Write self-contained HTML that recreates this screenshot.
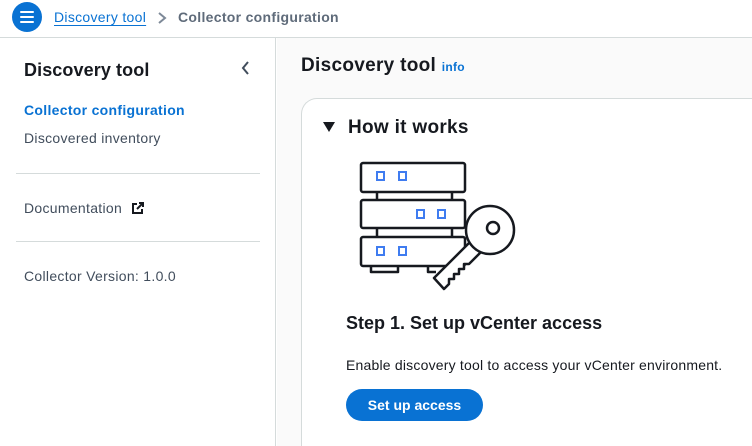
<!DOCTYPE html>
<html><head><style>
*{margin:0;padding:0;box-sizing:border-box}
html,body{width:752px;height:446px;overflow:hidden}
body{font-family:"Liberation Sans",sans-serif;background:#fff;position:relative;color:#16191f}
.top{position:absolute;left:0;top:0;width:752px;height:38px;border-bottom:1px solid #d5dbdb;background:#fff}
.menu{position:absolute;left:12px;top:2px;width:30px;height:30px;border-radius:50%;background:#0972d3}
.menu i{position:absolute;left:8px;width:14px;height:2px;background:#fff;border-radius:1px}
.a{position:absolute;font-size:14px;white-space:nowrap;letter-spacing:0.3px}
.side{position:absolute;left:0;top:38px;width:276px;height:408px;border-right:1px solid #d5dbdb;background:#fff}
.hr{position:absolute;left:16px;width:244px;height:1px;background:#d5dbdb}
.main{position:absolute;left:277px;top:38px;width:475px;height:408px;background:#fafafa;overflow:hidden}
.card{position:absolute;left:24px;top:60px;width:470px;height:348px;background:#fff;border:1px solid #d5dbdb;border-bottom:none;border-radius:16px 0 0 0}
.btn{position:absolute;left:346px;top:389px;width:137px;height:32px;border-radius:16px;background:#0972d3;color:#fff;font-weight:bold;font-size:14px;text-align:center;line-height:32px}
</style></head><body>
<div class="top">
<div class="menu"><i style="top:9px"></i><i style="top:14px"></i><i style="top:19px"></i></div>
<div class="a" style="left:54px;top:9px;color:#0972d3;text-decoration:underline;text-underline-offset:3px">Discovery tool</div>
<svg style="position:absolute;left:156px;top:11px" width="12" height="14"><path d="M3 2l6 5-6 5" fill="none" stroke="#7d8998" stroke-width="2"/></svg>
<div class="a" style="left:178px;top:9px;color:#5f6b7a;font-weight:bold;letter-spacing:0.3px">Collector configuration</div>
</div>
<div class="side">
<div class="a" style="left:24px;top:22px;font-size:18px;font-weight:bold;letter-spacing:0.1px">Discovery tool</div>
<svg style="position:absolute;left:240px;top:22px" width="12" height="16"><path d="M8 2l-5 6 5 6" fill="none" stroke="#414d5c" stroke-width="2"/></svg>
<div class="a" style="left:24px;top:64px;color:#0972d3;font-weight:bold">Collector configuration</div>
<div class="a" style="left:24px;top:92px;color:#414d5c">Discovered inventory</div>
<div class="hr" style="top:135px"></div>
<div class="a" style="left:24px;top:162px;color:#414d5c">Documentation</div>
<svg style="position:absolute;left:131px;top:163px" width="14" height="14"><path d="M6 3H2v9h9V8M8 2h4v4M12 2L6 8" fill="none" stroke="#16191f" stroke-width="2"/></svg>
<div class="hr" style="top:203px"></div>
<div class="a" style="left:24px;top:230px;color:#414d5c">Collector Version: 1.0.0</div>
</div>
<div class="main">
<div class="a" style="left:24px;top:17px;font-size:19px;font-weight:bold">Discovery tool <span style="font-size:12px;color:#0972d3">info</span></div>
<div class="card"></div>
</div>
<svg style="position:absolute;left:323px;top:122px" width="12" height="10"><path d="M0 0h12L6 10z" fill="#16191f"/></svg>
<div class="a" style="left:348px;top:117px;font-size:19px;font-weight:bold">How it works</div>
<svg style="position:absolute;left:0;top:0" width="752" height="446">
<g fill="none" stroke="#16191f" stroke-width="2.5" stroke-linejoin="round">
<rect x="361" y="163" width="104" height="29" rx="2"/>
<rect x="361" y="200" width="104" height="28" rx="2"/>
<rect x="361" y="237" width="104" height="29" rx="2"/>
<path d="M377 192v8M452 192v8M377 228v9M452 228v9M371 266v6h27v-6M428 266v6h8"/>
<path d="M472 240L434 278L444 289L449 284L449 279L454 279L454 274L459 274L459 269L464 269L464 264L469 264L486 247Z" fill="#fff"/>
<circle cx="490" cy="230" r="24" fill="#fff"/>
<circle cx="493" cy="228" r="6"/>
</g>
<g fill="none" stroke="#3f7cf0" stroke-width="2">
<rect x="377" y="172" width="7" height="8"/><rect x="399" y="172" width="7" height="8"/>
<rect x="417" y="210" width="7" height="8"/><rect x="438" y="210" width="7" height="8"/>
<rect x="377" y="247" width="7" height="8"/><rect x="399" y="247" width="7" height="8"/>
</g>
</svg>
<div class="a" style="left:346px;top:313px;font-size:18px;font-weight:bold;letter-spacing:0">Step 1. Set up vCenter access</div>
<div class="a" style="left:346px;top:357px;color:#16191f;letter-spacing:0.2px">Enable discovery tool to access your vCenter environment.</div>
<div class="btn">Set up access</div>
</body></html>
